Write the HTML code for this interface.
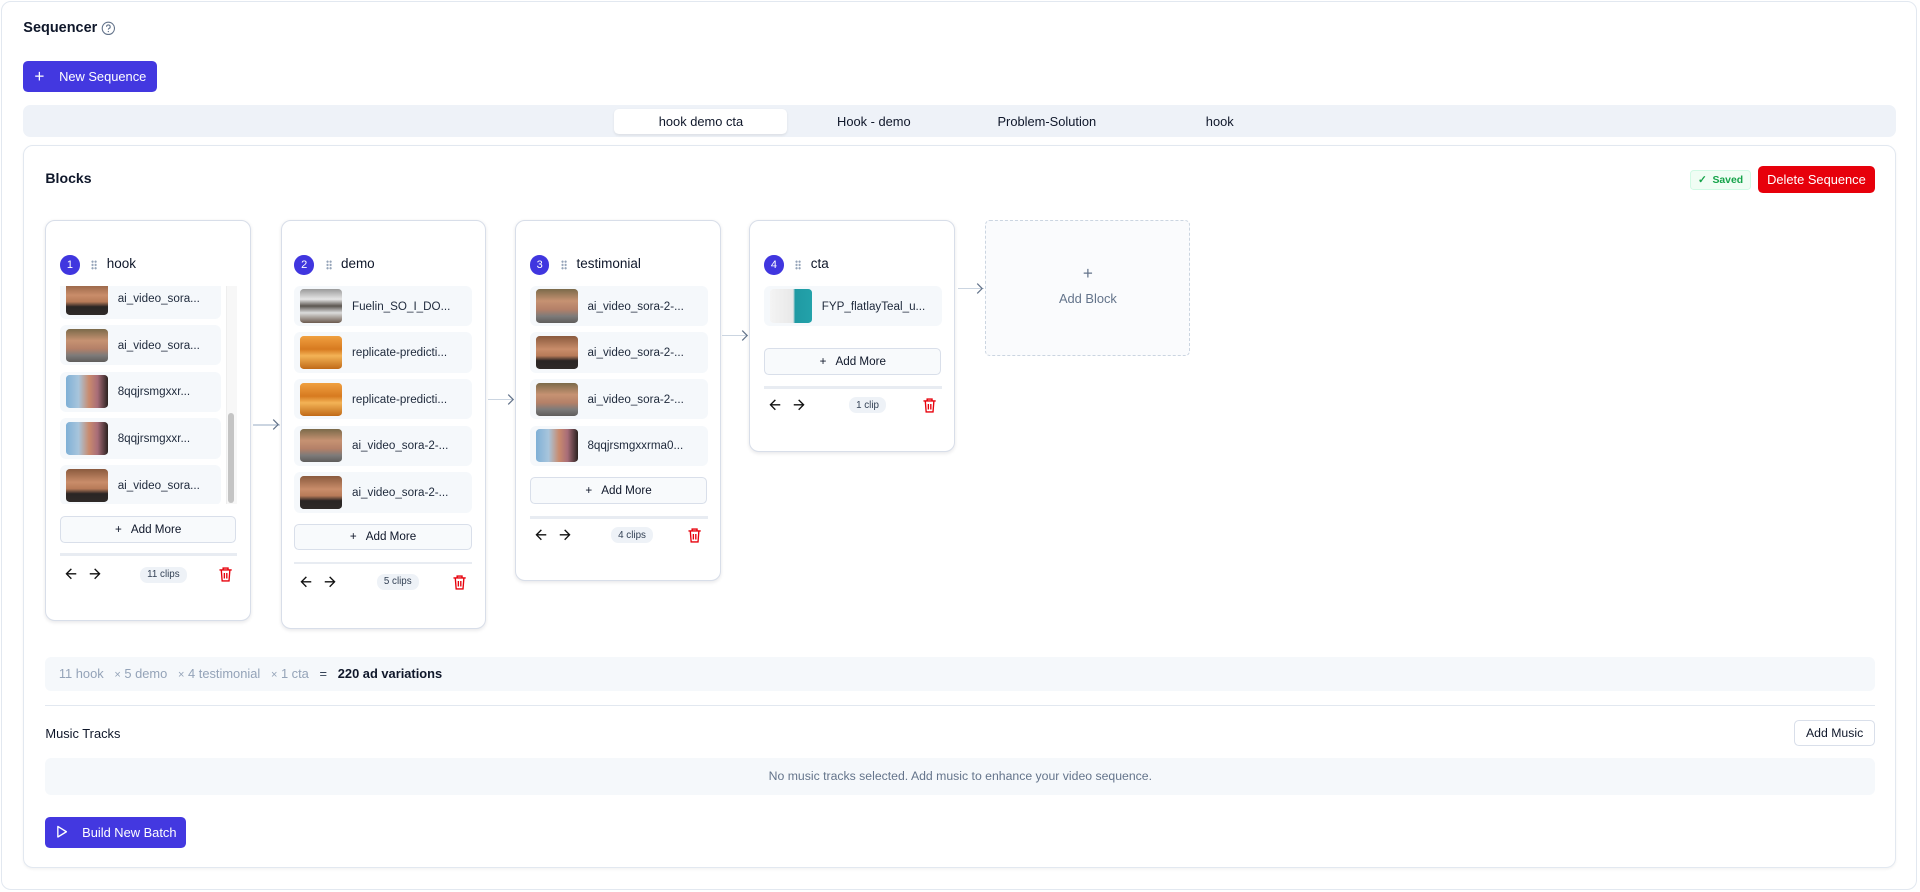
<!DOCTYPE html>
<html><head><meta charset="utf-8">
<style>
html{zoom:1.2265}
body{margin:0;width:1565px;height:727px;overflow:hidden;background:#fff;font-family:"Liberation Sans",sans-serif;color:#0f172a;position:relative}
.a{position:absolute}
.outer{left:1px;top:1px;width:1560px;height:723px;border:1px solid #e2e8f0;border-radius:8px}
.btn{background:#4338e0;color:#fff;border-radius:4px;font-size:10.5px;display:flex;align-items:center}
.tabs{left:19px;top:86px;width:1527px;height:26px;background:#eef2f8;border-radius:6px}
.tab{top:89px;width:141px;height:20px;font-size:10.5px;font-weight:500;display:flex;align-items:center;justify-content:center;color:#0f172a}
.tab.act{background:#fff;border-radius:4px;box-shadow:0 1px 2px rgba(0,0,0,.08)}
.main{left:19px;top:118px;width:1525px;height:588px;border:1px solid #e2e8f0;border-radius:8px;box-shadow:0 1px 2px rgba(0,0,0,.05)}
.card{border:1px solid #d8dee9;border-radius:8px;background:#fff;box-shadow:0 1px 3px rgba(15,23,42,.1);width:166px;top:179px}
.badge{width:16px;height:16px;border-radius:50%;background:#4036df;color:#fff;font-size:9px;display:flex;align-items:center;justify-content:center}
.dots{width:5px;height:8px;background:radial-gradient(circle,#94a3b8 0.8px,transparent 1px) 0 0/2.5px 2.7px}
.name{font-size:11px;font-weight:500}
.item{height:33px;background:#f5f8fb;border-radius:5px;display:flex;align-items:center;font-size:9.5px;color:#1e293b}
.th{width:34px;height:27px;border-radius:3px;margin-left:5px;margin-right:8px;flex:none}
.t1{background:linear-gradient(180deg,#8a5a3e 0%,#c98d6a 40%,#b77a58 60%,#2a2524 75%,#2f2a28 100%)}
.t2{background:linear-gradient(180deg,#7b6a4a 0%,#c69272 35%,#b48068 60%,#7d7b7a 80%,#5f5d5c 100%)}
.t3{background:linear-gradient(90deg,#7fb0d6 0%,#a8c5dc 30%,#c98a6d 55%,#a86d78 75%,#2b2220 100%)}
.t4{background:linear-gradient(180deg,#9a9a9a,#e6e6e6 30%,#5b5550 50%,#dcdcdc 70%,#6b5a4e)}
.t5{background:linear-gradient(180deg,#f0a040,#d77a20 40%,#f3b356 60%,#c06a18)}
.t6{background:linear-gradient(90deg,#f4f4f4 0%,#e8e8e8 55%,#1f9aa3 60%,#23a2aa 100%)}
.add{height:20px;border:1px solid #d9dfea;background:#f8fafc;border-radius:4px;display:flex;align-items:center;justify-content:center;font-size:9.5px;font-weight:500;color:#0f172a}
.div{height:2px;background:#e8ecf2}
.pill{font-size:8px;color:#334155;background:#eef2f7;border-radius:6px;padding:2px 6px}
.conn{height:1px;background:#cbd5e1}
</style></head><body>
<div class="a outer"></div>
<div class="a" style="left:19px;top:16px;font-size:11.8px;font-weight:600">Sequencer</div>
<svg class="a" style="left:82px;top:17px" width="12" height="12" viewBox="0 0 12 12"><circle cx="6" cy="6" r="5" fill="none" stroke="#64748b" stroke-width="0.9"/><path d="M4.5 4.7a1.5 1.5 0 1 1 2 1.4c-.4.2-.5.5-.5.9" fill="none" stroke="#64748b" stroke-width="0.9"/><circle cx="6" cy="8.6" r="0.55" fill="#64748b"/></svg>
<div class="a btn" style="left:19px;top:50px;width:109px;height:25px"><span style="margin-left:9px;font-size:14px;line-height:1">+</span><span style="margin-left:12px">New Sequence</span></div>
<div class="a tabs"></div>
<div class="a tab act" style="left:501px">hook demo cta</div>
<div class="a tab" style="left:642px">Hook - demo</div>
<div class="a tab" style="left:783px">Problem-Solution</div>
<div class="a tab" style="left:924px">hook</div>
<div class="a main"></div>
<div class="a" style="left:37px;top:139px;font-size:11.5px;font-weight:600">Blocks</div>
<div class="a" style="left:1378px;top:139px;width:48px;height:14px;border:1px solid #d1fae5;background:#f0fdf4;border-radius:3px;color:#16a34a;font-size:8.5px;font-weight:600;display:flex;align-items:center;justify-content:center">✓&nbsp; Saved</div>
<div class="a" style="left:1433px;top:135px;width:96px;height:22px;background:#e7000b;border-radius:4px;color:#fff;font-size:10.5px;display:flex;align-items:center;justify-content:center">Delete Sequence</div>

<!-- card 1 -->
<div class="a card" style="left:37px;height:326px"></div>
<div class="a badge" style="left:49px;top:208px">1</div><div class="a dots" style="left:74px;top:212px"></div><div class="a name" style="left:87px;top:209px">hook</div>
<div class="a" style="left:49px;top:233px;width:144px;height:178px;overflow:hidden">
 <div class="a" style="left:135px;top:0;width:9px;height:178px;background:#f7f7f7;border-left:1px solid #eee"></div>
 <div class="a" style="left:137px;top:104px;width:5px;height:73px;background:#c4c4c4;border-radius:3px"></div>
 <div class="a item" style="left:0;top:-6px;width:131px"><div class="th t1"></div>ai_video_sora...</div>
 <div class="a item" style="left:0;top:32px;width:131px"><div class="th t2"></div>ai_video_sora...</div>
 <div class="a item" style="left:0;top:70px;width:131px"><div class="th t3"></div>8qqjrsmgxxr...</div>
 <div class="a item" style="left:0;top:108px;width:131px"><div class="th t3"></div>8qqjrsmgxxr...</div>
 <div class="a item" style="left:0;top:146px;width:131px"><div class="th t1"></div>ai_video_sora...</div>
</div>
<div class="a add" style="left:49px;top:421px;width:142px">+&nbsp;&nbsp; Add More</div>
<div class="a div" style="left:49px;top:451px;width:144px"></div>

<!-- card 2 -->
<div class="a card" style="left:229px;height:332px"></div>
<div class="a badge" style="left:240px;top:208px">2</div><div class="a dots" style="left:266px;top:212px"></div><div class="a name" style="left:278px;top:209px">demo</div>
<div class="a item" style="left:240px;top:233px;width:145px"><div class="th t4"></div>Fuelin_SO_I_DO...</div>
<div class="a item" style="left:240px;top:271px;width:145px"><div class="th t5"></div>replicate-predicti...</div>
<div class="a item" style="left:240px;top:309px;width:145px"><div class="th t5"></div>replicate-predicti...</div>
<div class="a item" style="left:240px;top:347px;width:145px"><div class="th t2"></div>ai_video_sora-2-...</div>
<div class="a item" style="left:240px;top:385px;width:145px"><div class="th t1"></div>ai_video_sora-2-...</div>
<div class="a add" style="left:240px;top:427px;width:143px">+&nbsp;&nbsp; Add More</div>
<div class="a div" style="left:240px;top:458px;width:145px"></div>

<!-- card 3 -->
<div class="a card" style="left:420px;height:293px"></div>
<div class="a badge" style="left:432px;top:208px">3</div><div class="a dots" style="left:457px;top:212px"></div><div class="a name" style="left:470px;top:209px">testimonial</div>
<div class="a item" style="left:432px;top:233px;width:145px"><div class="th t2"></div>ai_video_sora-2-...</div>
<div class="a item" style="left:432px;top:271px;width:145px"><div class="th t1"></div>ai_video_sora-2-...</div>
<div class="a item" style="left:432px;top:309px;width:145px"><div class="th t2"></div>ai_video_sora-2-...</div>
<div class="a item" style="left:432px;top:347px;width:145px"><div class="th t3"></div>8qqjrsmgxxrma0...</div>
<div class="a add" style="left:432px;top:389px;width:143px">+&nbsp;&nbsp; Add More</div>
<div class="a div" style="left:432px;top:421px;width:145px"></div>

<!-- card 4 -->
<div class="a card" style="left:611px;height:188px"></div>
<div class="a badge" style="left:623px;top:208px">4</div><div class="a dots" style="left:648px;top:212px"></div><div class="a name" style="left:661px;top:209px">cta</div>
<div class="a item" style="left:623px;top:233px;width:145px"><div class="th t6"></div>FYP_flatlayTeal_u...</div>
<div class="a add" style="left:623px;top:284px;width:143px">+&nbsp;&nbsp; Add More</div>
<div class="a div" style="left:623px;top:315px;width:145px"></div>

<!-- footers -->
<svg width="0" height="0" style="position:absolute"><defs>
<g id="ft"><path d="M10 4l-4 4 4 4M6 8h8" transform="translate(-4,0)" fill="none" stroke="#111" stroke-width="1.1"/><path d="M27 4l4 4-4 4M23 8h8" transform="translate(-2,0)" fill="none" stroke="#111" stroke-width="1.1"/></g>
<g id="tr"><path d="M2 4h10M5 4V2.5h4V4M3.5 4l.7 9h5.6l.7-9M6 6.5v4.5M8 6.5v4.5" fill="none" stroke="#e7000b" stroke-width="1.1"/></g>
</defs></svg>
<svg class="a" style="left:52px;top:460px" width="40" height="16"><use href="#ft"/></svg>
<div class="a pill" style="left:114px;top:462px">11 clips</div>
<svg class="a" style="left:177px;top:461px" width="14" height="14"><use href="#tr"/></svg>

<svg class="a" style="left:244px;top:466px" width="40" height="16"><use href="#ft"/></svg>
<div class="a pill" style="left:307px;top:468px">5 clips</div>
<svg class="a" style="left:368px;top:467px" width="14" height="14"><use href="#tr"/></svg>

<svg class="a" style="left:435px;top:428px" width="40" height="16"><use href="#ft"/></svg>
<div class="a pill" style="left:498px;top:430px">4 clips</div>
<svg class="a" style="left:559px;top:429px" width="14" height="14"><use href="#tr"/></svg>

<svg class="a" style="left:626px;top:322px" width="40" height="16"><use href="#ft"/></svg>
<div class="a pill" style="left:692px;top:324px">1 clip</div>
<svg class="a" style="left:751px;top:323px" width="14" height="14"><use href="#tr"/></svg>

<!-- connectors -->
<div class="a conn" style="left:206px;top:346px;width:22px"></div><svg class="a" style="left:222px;top:342px" width="8" height="9"><path d="M1 .5l4 4-4 4" fill="none" stroke="#64748b"/></svg>
<div class="a conn" style="left:398px;top:325px;width:21px"></div><svg class="a" style="left:413px;top:321px" width="8" height="9"><path d="M1 .5l4 4-4 4" fill="none" stroke="#64748b"/></svg>
<div class="a conn" style="left:589px;top:273px;width:21px"></div><svg class="a" style="left:604px;top:269px" width="8" height="9"><path d="M1 .5l4 4-4 4" fill="none" stroke="#64748b"/></svg>
<div class="a conn" style="left:781px;top:235px;width:21px"></div><svg class="a" style="left:796px;top:231px" width="8" height="9"><path d="M1 .5l4 4-4 4" fill="none" stroke="#64748b"/></svg>

<div class="a" style="left:803px;top:179px;width:166px;height:110px;border:1px dashed #cbd5e1;border-radius:4px;background:#fafbfd"></div>
<div class="a" style="left:803px;top:216px;width:168px;text-align:center;color:#64748b;font-size:14px;line-height:14px">+</div>
<div class="a" style="left:803px;top:237px;width:168px;text-align:center;color:#64748b;font-size:10.5px">Add Block</div>

<div class="a" style="left:37px;top:536px;width:1492px;height:27px;background:#f5f8fb;border-radius:5px"></div>
<div class="a" style="left:48px;top:543px;font-size:10.5px;color:#94a3b8;white-space:pre">11 hook   <span style="font-size:9px">×</span> 5 demo   <span style="font-size:9px">×</span> 4 testimonial   <span style="font-size:9px">×</span> 1 cta   <span style="color:#334155">=</span>   <b style="color:#0f172a">220 ad variations</b></div>
<div class="a" style="left:37px;top:575px;width:1492px;height:1px;background:#e2e8f0"></div>
<div class="a" style="left:37px;top:592px;font-size:10.5px;font-weight:500">Music Tracks</div>
<div class="a" style="left:1463px;top:587px;width:64px;height:20px;border:1px solid #d9dfea;border-radius:4px;font-size:10px;font-weight:500;display:flex;align-items:center;justify-content:center">Add Music</div>
<div class="a" style="left:37px;top:618px;width:1492px;height:30px;background:#f5f8fb;border-radius:5px;color:#64748b;font-size:10px;display:flex;align-items:center;justify-content:center">No music tracks selected. Add music to enhance your video sequence.</div>
<div class="a btn" style="left:37px;top:666px;width:115px;height:25px"><svg style="margin-left:9px" width="10" height="11" viewBox="0 0 10 11"><path d="M1.5 1.2v8.6L8.5 5.5z" fill="none" stroke="#fff" stroke-width="1.1" stroke-linejoin="round"/></svg><span style="margin-left:11px">Build New Batch</span></div>
</body></html>
